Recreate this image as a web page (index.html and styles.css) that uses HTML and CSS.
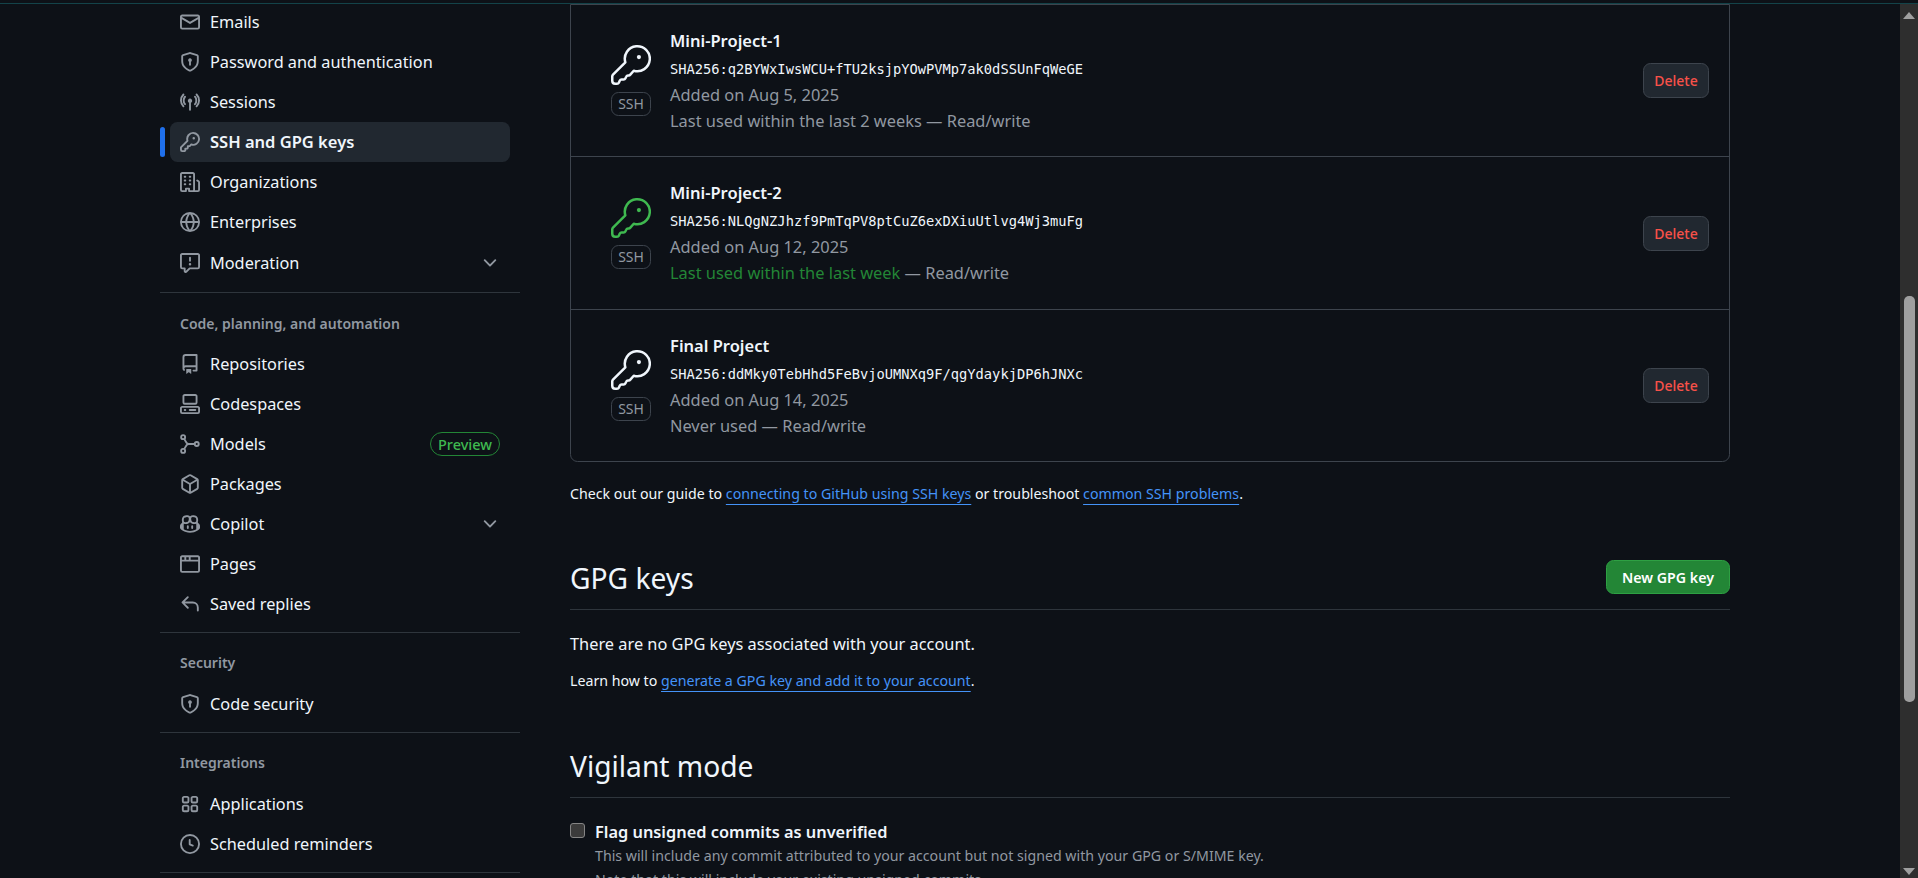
FILE: index.html
```html
<!DOCTYPE html>
<html lang="en">
<head>
    <meta charset="UTF-8">
    <meta name="viewport" content="width=device-width, initial-scale=1.0">
    <title>SSH and GPG keys</title>
    <link rel="stylesheet" href="styles.css">
</head>
<body>
    <svg class="defs" width="0" height="0">
        <symbol id="shield" viewBox="0 0 16 16"><path d="m8.533.133 5.25 1.68A1.75 1.75 0 0 1 15 3.48V7c0 1.566-.32 3.182-1.303 4.682-.983 1.498-2.585 2.813-5.032 3.855a1.697 1.697 0 0 1-1.33 0c-2.447-1.042-4.049-2.357-5.032-3.855C1.32 10.182 1 8.566 1 7V3.48a1.75 1.75 0 0 1 1.217-1.667l5.25-1.68a1.748 1.748 0 0 1 1.066 0Zm-.61 1.429.001.001-5.25 1.68a.251.251 0 0 0-.174.237V7c0 1.36.275 2.666 1.057 3.859.784 1.194 2.121 2.342 4.366 3.298a.196.196 0 0 0 .154 0c2.245-.957 3.582-2.103 4.366-3.297C13.225 9.666 13.5 8.358 13.5 7V3.48a.25.25 0 0 0-.174-.238l-5.25-1.68a.25.25 0 0 0-.153 0ZM9.5 6.5c0 .536-.286 1.032-.75 1.3v2.45a.75.75 0 0 1-1.5 0V7.8A1.5 1.5 0 1 1 9.5 6.5Z"/></symbol>
        <symbol id="chevron" viewBox="0 0 16 16"><path d="M12.78 5.22a.749.749 0 0 1 0 1.06l-4.25 4.25a.749.749 0 0 1-1.06 0L3.22 6.28a.749.749 0 1 1 1.06-1.06L8 8.939l3.72-3.719a.749.749 0 0 1 1.06 0Z"/></symbol>
        <symbol id="big-key" viewBox="0 0 24 24">
            <path fill="none" stroke="currentColor" stroke-width="1.5" stroke-linejoin="round" d="M8.6 10.4 1.2 17.8Q.75 18.25.75 18.9V21.5Q.75 23.25 2.5 23.25H3.6Q4.4 23.25 4.7 22.6L5.3 21.3Q5.6 20.75 6.3 20.75H7.6Q8.3 20.75 8.6 20.1L9.2 18.9Q9.5 18.25 10.2 18.25H10.6Q11.2 18.25 11.6 17.8L13.65 15.45A7.5 7.5 0 1 0 8.6 10.4Z"/>
            <circle cx="16.75" cy="7.25" r="1.25" fill="currentColor"/>
        </symbol>
    </svg>

    <div class="top-strip"></div>

    <div class="page">
        <nav class="sidebar">
            <a class="nav-item"><svg class="icon" viewBox="0 0 16 16"><path d="M1.75 2h12.5c.966 0 1.75.784 1.75 1.75v8.5A1.75 1.75 0 0 1 14.25 14H1.75A1.75 1.75 0 0 1 0 12.25v-8.5C0 2.784.784 2 1.75 2ZM1.5 12.251c0 .138.112.25.25.25h12.5a.25.25 0 0 0 .25-.25V5.809L8.38 9.397a.75.75 0 0 1-.76 0L1.5 5.809v6.442Zm13-8.181v-.32a.25.25 0 0 0-.25-.25H1.75a.25.25 0 0 0-.25.25v.32L8 7.88Z"/></svg>Emails</a>
            <a class="nav-item"><svg class="icon"><use href="#shield"/></svg>Password and authentication</a>
            <a class="nav-item"><svg class="icon" viewBox="0 0 16 16"><path d="M8.75 8.582v5.668a.75.75 0 0 1-1.5 0V8.582a1.75 1.75 0 1 1 1.5 0Zm3.983-7.125a.75.75 0 0 1 1.06.026A7.7 7.7 0 0 1 16 6.75a7.7 7.7 0 0 1-2.207 5.268.75.75 0 1 1-1.086-1.036A6.2 6.2 0 0 0 14.5 6.75a6.2 6.2 0 0 0-1.793-4.232.75.75 0 0 1 .026-1.06Zm-9.466 0a.75.75 0 0 1 .026 1.06A6.2 6.2 0 0 0 1.5 6.75a6.2 6.2 0 0 0 1.793 4.232.75.75 0 1 1-1.086 1.036A7.7 7.7 0 0 1 0 6.75a7.7 7.7 0 0 1 2.207-5.268.75.75 0 0 1 1.06-.025Zm8.2 1.8a.75.75 0 0 1 1.06.03A5 5 0 0 1 13.8 6.75a5 5 0 0 1-1.27 3.51.75.75 0 1 1-1.09-1.03 3.5 3.5 0 0 0 .86-2.48 3.5 3.5 0 0 0-.86-2.48.75.75 0 0 1 .03-1.04Zm-6.93 0a.75.75 0 0 1 .03 1.06 3.5 3.5 0 0 0-.87 2.43c0 .92.3 1.76.87 2.48a.75.75 0 1 1-1.09 1.03A5 5 0 0 1 2.2 6.75c0-1.33.45-2.53 1.27-3.51a.75.75 0 0 1 1.06-.03Z"/></svg>Sessions</a>
            <a class="nav-item active"><svg class="icon" viewBox="0 0 16 16"><path d="M10.5 0a5.499 5.499 0 1 1-1.288 10.848l-.932.932a.749.749 0 0 1-.53.22H7v.75a.749.749 0 0 1-.22.53l-.5.5a.749.749 0 0 1-.53.22H5v.75a.749.749 0 0 1-.22.53l-.5.5a.749.749 0 0 1-.53.22h-2A1.75 1.75 0 0 1 0 14.25v-2c0-.199.079-.389.22-.53l4.932-4.932A5.5 5.5 0 0 1 10.5 0Zm-4 5.5c-.001.431.069.86.205 1.269a.75.75 0 0 1-.181.768L1.5 12.56v1.69c0 .138.112.25.25.25h1.69l.06-.06v-1.19a.75.75 0 0 1 .75-.75h1.19l.06-.06v-1.19a.75.75 0 0 1 .75-.75h1.19l1.023-1.025a.75.75 0 0 1 .768-.18A4 4 0 1 0 6.5 5.5ZM11 6a1 1 0 1 1 0-2 1 1 0 0 1 0 2Z"/></svg>SSH and GPG keys</a>
            <a class="nav-item"><svg class="icon" viewBox="0 0 16 16"><path d="M1.75 16A1.75 1.75 0 0 1 0 14.25V1.75C0 .784.784 0 1.75 0h8.5C11.216 0 12 .784 12 1.75v12.5c0 .085-.006.168-.018.25h2.268a.25.25 0 0 0 .25-.25V8.285a.25.25 0 0 0-.111-.208l-1.055-.703a.749.749 0 1 1 .832-1.248l1.055.703c.487.325.779.871.779 1.456v5.965A1.75 1.75 0 0 1 14.25 16h-3.5a.766.766 0 0 1-.197-.026c-.099.017-.2.026-.303.026h-3a.75.75 0 0 1-.75-.75V14h-1v1.25a.75.75 0 0 1-.75.75Zm-.25-1.75c0 .138.112.25.25.25H4v-1.25a.75.75 0 0 1 .75-.75h2.5a.75.75 0 0 1 .75.75v1.25h2.25a.25.25 0 0 0 .25-.25V1.75a.25.25 0 0 0-.25-.25h-8.5a.25.25 0 0 0-.25.25ZM3.75 6h.5a.75.75 0 0 1 0 1.5h-.5a.75.75 0 0 1 0-1.5ZM3 3.75A.75.75 0 0 1 3.75 3h.5a.75.75 0 0 1 0 1.5h-.5A.75.75 0 0 1 3 3.75Zm4 3A.75.75 0 0 1 7.75 6h.5a.75.75 0 0 1 0 1.5h-.5A.75.75 0 0 1 7 6.75ZM7.75 3h.5a.75.75 0 0 1 0 1.5h-.5a.75.75 0 0 1 0-1.5ZM3 9.75A.75.75 0 0 1 3.75 9h.5a.75.75 0 0 1 0 1.5h-.5A.75.75 0 0 1 3 9.75ZM7.75 9h.5a.75.75 0 0 1 0 1.5h-.5a.75.75 0 0 1 0-1.5Z"/></svg>Organizations</a>
            <a class="nav-item"><svg class="icon" viewBox="0 0 16 16"><path d="M8 0a8 8 0 1 1 0 16A8 8 0 0 1 8 0ZM5.78 8.75a9.64 9.64 0 0 0 1.363 4.177c.255.426.542.832.857 1.215.245-.296.551-.705.857-1.215A9.64 9.64 0 0 0 10.22 8.75Zm4.44-1.5a9.64 9.64 0 0 0-1.363-4.177c-.307-.51-.612-.919-.857-1.215a9.927 9.927 0 0 0-.857 1.215A9.64 9.64 0 0 0 5.78 7.25Zm-5.944 1.5H1.543a6.507 6.507 0 0 0 4.666 5.5c-.123-.181-.24-.365-.352-.552-.715-1.192-1.437-2.874-1.581-4.948Zm-2.733-1.5h2.733c.144-2.074.866-3.756 1.58-4.948.12-.197.237-.381.353-.552a6.507 6.507 0 0 0-4.666 5.5Zm10.181 1.5c-.144 2.074-.866 3.756-1.58 4.948-.12.197-.237.381-.353.552a6.507 6.507 0 0 0 4.666-5.5Zm2.733-1.5a6.507 6.507 0 0 0-4.666-5.5c.123.181.24.365.353.552.714 1.192 1.436 2.874 1.58 4.948Z"/></svg>Enterprises</a>
            <a class="nav-item tall"><svg class="icon" viewBox="0 0 16 16"><path d="M0 1.75C0 .784.784 0 1.75 0h12.5C15.216 0 16 .784 16 1.75v9.5A1.75 1.75 0 0 1 14.25 13H8.06l-2.573 2.573A1.458 1.458 0 0 1 3 14.543V13H1.75A1.75 1.75 0 0 1 0 11.25Zm1.75-.25a.25.25 0 0 0-.25.25v9.5c0 .138.112.25.25.25h2a.75.75 0 0 1 .75.75v2.19l2.72-2.72a.749.749 0 0 1 .53-.22h6.5a.25.25 0 0 0 .25-.25v-9.5a.25.25 0 0 0-.25-.25Zm7 2.25v2.5a.75.75 0 0 1-1.5 0v-2.5a.75.75 0 0 1 1.5 0ZM9 9a1 1 0 1 1-2 0 1 1 0 0 1 2 0Z"/></svg>Moderation<svg class="chevron"><use href="#chevron"/></svg></a>

            <div class="nav-divider"></div>
            <div class="nav-heading code-heading">Code, planning, and automation</div>
            <a class="nav-item"><svg class="icon" viewBox="0 0 16 16"><path d="M2 2.5A2.5 2.5 0 0 1 4.5 0h8.75a.75.75 0 0 1 .75.75v12.5a.75.75 0 0 1-.75.75h-2.5a.75.75 0 0 1 0-1.5h1.75v-2h-8a1 1 0 0 0-.714 1.7.75.75 0 1 1-1.072 1.05A2.495 2.495 0 0 1 2 11.5Zm10.5-1h-8a1 1 0 0 0-1 1v6.708A2.486 2.486 0 0 1 4.5 9h8ZM5 12.25a.25.25 0 0 1 .25-.25h3.5a.25.25 0 0 1 .25.25v3.25a.25.25 0 0 1-.4.2l-1.45-1.087a.249.249 0 0 0-.3 0L5.4 15.7a.25.25 0 0 1-.4-.2Z"/></svg>Repositories</a>
            <a class="nav-item"><svg class="icon" viewBox="0 0 16 16"><path d="M0 11.25c0-.966.784-1.75 1.75-1.75h12.5c.966 0 1.75.784 1.75 1.75v3A1.75 1.75 0 0 1 14.25 16H1.75A1.75 1.75 0 0 1 0 14.25Zm2-9.5C2 .784 2.784 0 3.75 0h8.5C13.216 0 14 .784 14 1.75v5a1.75 1.75 0 0 1-1.75 1.75h-8.5A1.75 1.75 0 0 1 2 6.75Zm1.75-.25a.25.25 0 0 0-.25.25v5c0 .138.112.25.25.25h8.5a.25.25 0 0 0 .25-.25v-5a.25.25 0 0 0-.25-.25Zm-2 9.5a.25.25 0 0 0-.25.25v3c0 .138.112.25.25.25h12.5a.25.25 0 0 0 .25-.25v-3a.25.25 0 0 0-.25-.25Z"/><path d="M7 12.75a.75.75 0 0 1 .75-.75h4.5a.75.75 0 0 1 0 1.5h-4.5a.75.75 0 0 1-.75-.75Zm-4 0a.75.75 0 0 1 .75-.75h.5a.75.75 0 0 1 0 1.5h-.5a.75.75 0 0 1-.75-.75Z"/></svg>Codespaces</a>
            <a class="nav-item"><svg class="icon" viewBox="0 0 16 16"><g fill="none" stroke="currentColor" stroke-width="1.5"><circle cx="2.5" cy="2.5" r="1.6"/><circle cx="2.5" cy="13.5" r="1.6"/><circle cx="13.4" cy="8" r="1.6"/><path d="M3.3 3.9 5.2 7Q5.8 8 7 8H11.8M3.3 12.1 5.2 9Q5.8 8 7 8"/></g></svg>Models<span class="preview">Preview</span></a>
            <a class="nav-item"><svg class="icon" viewBox="0 0 16 16"><path d="m8.878.392 5.25 3.045c.54.314.872.89.872 1.514v6.098a1.75 1.75 0 0 1-.872 1.514l-5.25 3.045a1.75 1.75 0 0 1-1.756 0l-5.25-3.045A1.75 1.75 0 0 1 1 11.049V4.951c0-.624.332-1.201.872-1.514L7.122.392a1.75 1.75 0 0 1 1.756 0ZM7.875 1.69l-4.63 2.685L8 7.133l4.755-2.758-4.63-2.685a.248.248 0 0 0-.25 0ZM2.5 5.677v5.372c0 .09.047.171.125.216l4.625 2.683V8.432Zm6.25 8.271 4.625-2.683a.25.25 0 0 0 .125-.216V5.677L8.75 8.432Z"/></svg>Packages</a>
            <a class="nav-item"><svg class="icon" viewBox="0 0 16 16"><path d="M7.998 15.035c-4.562 0-7.873-2.914-7.998-3.749V9.338c.085-.628.677-1.686 1.588-2.065.013-.07.024-.143.036-.218.029-.183.06-.384.126-.612-.201-.508-.254-1.084-.254-1.656 0-.87.128-1.769.693-2.484.579-.733 1.494-1.124 2.724-1.261 1.206-.134 2.262.034 2.944.765.05.053.096.108.139.165.044-.057.094-.112.143-.165.682-.731 1.738-.899 2.944-.765 1.23.137 2.145.528 2.724 1.261.566.715.693 1.614.693 2.484 0 .572-.053 1.148-.254 1.656.066.228.098.429.126.612.012.076.024.148.037.218.924.385 1.522 1.471 1.591 2.095v1.872c0 .766-3.351 3.795-8.002 3.795Zm0-1.485c2.28 0 4.584-1.11 5.002-1.433V7.862l-.023-.116c-.49.21-1.075.291-1.727.291-1.146 0-2.059-.327-2.71-.991A3.222 3.222 0 0 1 8 6.303a3.24 3.24 0 0 1-.544.743c-.65.664-1.563.991-2.71.991-.652 0-1.236-.081-1.727-.291l-.023.116v4.255c.419.323 2.722 1.433 5.002 1.433ZM6.762 2.83c-.193-.206-.637-.413-1.682-.297-1.019.113-1.479.404-1.713.7-.247.312-.369.789-.369 1.554 0 .793.129 1.171.308 1.371.162.181.519.379 1.442.379.853 0 1.339-.235 1.638-.54.315-.322.527-.827.617-1.553.117-.935-.037-1.395-.241-1.614Zm4.155-.297c-1.044-.116-1.488.091-1.681.297-.204.219-.359.679-.242 1.614.091.726.303 1.231.618 1.553.299.305.784.54 1.638.54.922 0 1.28-.198 1.442-.379.179-.2.308-.578.308-1.371 0-.765-.123-1.242-.37-1.554-.233-.296-.693-.587-1.713-.7Z"/><path d="M6.25 9.037a.75.75 0 0 1 .75.75v1.501a.75.75 0 0 1-1.5 0V9.787a.75.75 0 0 1 .75-.75Zm4.25.75v1.501a.75.75 0 0 1-1.5 0V9.787a.75.75 0 0 1 1.5 0Z"/></svg>Copilot<svg class="chevron"><use href="#chevron"/></svg></a>
            <a class="nav-item"><svg class="icon" viewBox="0 0 16 16"><path d="M0 2.75C0 1.784.784 1 1.75 1h12.5c.966 0 1.75.784 1.75 1.75v10.5A1.75 1.75 0 0 1 14.25 15H1.75A1.75 1.75 0 0 1 0 13.25ZM14.5 6h-13v7.25c0 .138.112.25.25.25h12.5a.25.25 0 0 0 .25-.25Zm-6-3.5v2h6V2.75a.25.25 0 0 0-.25-.25ZM5 2.5v2h2v-2Zm-3.25 0a.25.25 0 0 0-.25.25V4.5h2v-2Z"/></svg>Pages</a>
            <a class="nav-item"><svg class="icon" viewBox="0 0 16 16"><path d="M6.78 1.97a.75.75 0 0 1 0 1.06L3.81 6h6.44A4.75 4.75 0 0 1 15 10.75v2.5a.75.75 0 0 1-1.5 0v-2.5a3.25 3.25 0 0 0-3.25-3.25H3.81l2.97 2.97a.749.749 0 0 1-.326 1.275.749.749 0 0 1-.734-.215L1.47 7.28a.75.75 0 0 1 0-1.06l4.25-4.25a.75.75 0 0 1 1.06 0Z"/></svg>Saved replies</a>

            <div class="nav-divider"></div>
            <div class="nav-heading">Security</div>
            <a class="nav-item"><svg class="icon"><use href="#shield"/></svg>Code security</a>

            <div class="nav-divider"></div>
            <div class="nav-heading">Integrations</div>
            <a class="nav-item"><svg class="icon" viewBox="0 0 16 16"><path d="M1.5 3.25c0-.966.784-1.75 1.75-1.75h2.5c.966 0 1.75.784 1.75 1.75v2.5A1.75 1.75 0 0 1 5.75 7.5h-2.5A1.75 1.75 0 0 1 1.5 5.75Zm7 0c0-.966.784-1.75 1.75-1.75h2.5c.966 0 1.75.784 1.75 1.75v2.5a1.75 1.75 0 0 1-1.75 1.75h-2.5A1.75 1.75 0 0 1 8.5 5.75Zm-7 7c0-.966.784-1.75 1.75-1.75h2.5c.966 0 1.75.784 1.75 1.75v2.5a1.75 1.75 0 0 1-1.75 1.75h-2.5a1.75 1.75 0 0 1-1.75-1.75Zm7 0c0-.966.784-1.75 1.75-1.75h2.5c.966 0 1.75.784 1.75 1.75v2.5a1.75 1.75 0 0 1-1.75 1.75h-2.5a1.75 1.75 0 0 1-1.75-1.75ZM3.25 3a.25.25 0 0 0-.25.25v2.5c0 .138.112.25.25.25h2.5A.25.25 0 0 0 6 5.75v-2.5A.25.25 0 0 0 5.75 3Zm7 0a.25.25 0 0 0-.25.25v2.5c0 .138.112.25.25.25h2.5a.25.25 0 0 0 .25-.25v-2.5a.25.25 0 0 0-.25-.25ZM3 10.25v2.5c0 .138.112.25.25.25h2.5a.25.25 0 0 0 .25-.25v-2.5a.25.25 0 0 0-.25-.25h-2.5a.25.25 0 0 0-.25.25Zm7.25-.25a.25.25 0 0 0-.25.25v2.5c0 .138.112.25.25.25h2.5a.25.25 0 0 0 .25-.25v-2.5a.25.25 0 0 0-.25-.25Z"/></svg>Applications</a>
            <a class="nav-item"><svg class="icon" viewBox="0 0 16 16"><path d="M8 0a8 8 0 1 1 0 16A8 8 0 0 1 8 0ZM1.5 8a6.5 6.5 0 1 0 13 0 6.5 6.5 0 0 0-13 0Zm7-3.25v2.992l2.028.812a.75.75 0 0 1-.557 1.392l-2.5-1A.751.751 0 0 1 7 8.25v-3.5a.75.75 0 0 1 1.5 0Z"/></svg>Scheduled reminders</a>
            <div class="nav-divider"></div>
        </nav>

        <main class="content">
            <div class="key-box">
                <div class="key-row">
                    <div class="key-type">
                        <svg class="key-icon"><use href="#big-key"/></svg>
                        <span class="badge">SSH</span>
                    </div>
                    <div class="key-info">
                        <div class="key-name">Mini-Project-1</div>
                        <div class="key-hash">SHA256:q2BYWxIwsWCU+fTU2ksjpYOwPVMp7ak0dSSUnFqWeGE</div>
                        <div class="key-meta">Added on Aug 5, 2025</div>
                        <div class="key-meta">Last used within the last 2 weeks — Read/write</div>
                    </div>
                    <button class="btn-delete">Delete</button>
                </div>
                <div class="key-row">
                    <div class="key-type">
                        <svg class="key-icon recent"><use href="#big-key"/></svg>
                        <span class="badge">SSH</span>
                    </div>
                    <div class="key-info">
                        <div class="key-name">Mini-Project-2</div>
                        <div class="key-hash">SHA256:NLQgNZJhzf9PmTqPV8ptCuZ6exDXiuUtlvg4Wj3muFg</div>
                        <div class="key-meta">Added on Aug 12, 2025</div>
                        <div class="key-meta"><span class="recent-text">Last used within the last week</span> — Read/write</div>
                    </div>
                    <button class="btn-delete">Delete</button>
                </div>
                <div class="key-row">
                    <div class="key-type">
                        <svg class="key-icon"><use href="#big-key"/></svg>
                        <span class="badge">SSH</span>
                    </div>
                    <div class="key-info">
                        <div class="key-name">Final Project</div>
                        <div class="key-hash">SHA256:ddMky0TebHhd5FeBvjoUMNXq9F/qgYdaykjDP6hJNXc</div>
                        <div class="key-meta">Added on Aug 14, 2025</div>
                        <div class="key-meta">Never used — Read/write</div>
                    </div>
                    <button class="btn-delete">Delete</button>
                </div>
            </div>

            <p class="small-note guide">Check out our guide to <a href="#">connecting to GitHub using SSH keys</a> or troubleshoot <a href="#">common SSH problems</a>.</p>

            <div class="section-head gpg-head">
                <h2>GPG keys</h2>
                <button class="btn-new">New GPG key</button>
            </div>
            <p class="no-keys">There are no GPG keys associated with your account.</p>
            <p class="small-note learn">Learn how to <a href="#">generate a GPG key and add it to your account</a>.</p>

            <div class="section-head vigilant-head">
                <h2>Vigilant mode</h2>
            </div>
            <div class="check-row">
                <span class="check-box"></span>
                <div>
                    <div class="check-label">Flag unsigned commits as unverified</div>
                    <div class="check-note">This will include any commit attributed to your account but not signed with your GPG or S/MIME key.</div>
                    <div class="check-note">Note that this will include your existing unsigned commits.</div>
                </div>
            </div>
        </main>

        <div class="scrollbar">
            <span class="arrow-up"></span>
            <span class="thumb"></span>
            <span class="arrow-down"></span>
        </div>
    </div>
</body>
</html>
```

FILE: styles.css
```css
* {
    box-sizing: border-box;
}
html, body {
    height: 100%;
}
body {
    margin: 0;
    overflow: hidden;
    background-color: #0d1117;
    color: #f0f6fc;
    font-family: "Noto Sans", sans-serif;
    font-size: 16.35px;
    line-height: 24px;
}
.defs {
    display: block;
    height: 0;
}
.top-strip {
    height: 4px;
    border-bottom: 1px solid #134349;
}
.page {
    display: flex;
    height: 874px;
    overflow: hidden;
}

/* sidebar */
.sidebar {
    flex: none;
    width: 360px;
    margin-left: 160px;
    margin-top: -2px;
}
.nav-item {
    position: relative;
    display: flex;
    align-items: center;
    width: 340px;
    height: 40px;
    margin-left: 10px;
    padding-left: 10px;
    border-radius: 7.5px;
    font-size: 16.3px;
}
.nav-item.tall {
    height: 42px;
}
.nav-item.active {
    background-color: #212830;
    font-size: 16.5px;
    font-weight: 600;
}
.nav-item.active::before {
    content: "";
    position: absolute;
    left: -10px;
    top: 5px;
    width: 5px;
    height: 30px;
    border-radius: 3px;
    background-color: #1f6feb;
}
.icon {
    flex: none;
    width: 20px;
    height: 20px;
    margin-right: 10px;
    fill: #9198a1;
    color: #9198a1;
}
.chevron {
    width: 20px;
    height: 20px;
    margin-left: auto;
    margin-right: 10px;
    fill: #9198a1;
}
.preview {
    margin-left: auto;
    margin-right: 10px;
    margin-bottom: 1px;
    height: 24px;
    padding: 0 7px;
    border: 1px solid #238636;
    border-radius: 12px;
    color: #3fb950;
    font-size: 14.5px;
    font-weight: 500;
    line-height: 22px;
}
.nav-divider {
    height: 1px;
    margin-top: 8px;
    background-color: #3d444db3;
}
.nav-heading {
    height: 51px;
    padding: 18px 0 0 20px;
    color: #9198a1;
    font-size: 14px;
    font-weight: 600;
}
.code-heading {
    padding-top: 19px;
}

/* main column */
.content {
    flex: none;
    width: 1160px;
    margin-left: 50px;
}
.key-box {
    border: 1px solid #3d444d;
    border-radius: 0 0 7.5px 7.5px;
}
.key-row {
    display: flex;
    align-items: center;
    height: 152px;
    padding: 0 20px 0 40px;
    border-bottom: 1px solid #3d444d;
}
.key-row:nth-child(2) {
    height: 153px;
}
.key-row:last-child {
    height: 151px;
    border-bottom: none;
}
.key-type {
    display: flex;
    flex-direction: column;
    align-items: center;
    width: 40px;
    margin-right: 19px;
}
.key-icon {
    width: 40px;
    height: 40px;
    margin-bottom: 7px;
    color: #f0f6fc;
}
.key-icon.recent {
    color: #3fb950;
}
.badge {
    width: 40px;
    height: 24px;
    border: 1px solid #3d444d;
    border-radius: 7.5px;
    color: #9198a1;
    font-size: 14px;
    line-height: 22px;
    text-align: center;
}
.key-info {
    flex: 1;
    line-height: 26px;
}
.key-name {
    font-size: 16.5px;
    font-weight: 600;
}
.key-hash {
    margin-top: 2px;
    font-family: "DejaVu Sans Mono", monospace;
    font-size: 13.72px;
}
.key-meta {
    color: #9198a1;
    font-size: 16.4px;
}
.recent-text {
    color: #238636;
}
.btn-delete {
    width: 66px;
    height: 35px;
    padding: 0;
    border: 1px solid #3d444d;
    border-radius: 7.5px;
    background-color: #212830;
    color: #f85149;
    font-family: inherit;
    font-size: 14px;
    font-weight: 500;
}
.small-note {
    margin: 0;
    font-size: 14.2px;
}
.small-note a {
    color: #4493f8;
    text-decoration: underline;
    text-underline-offset: 5px;
}
.guide {
    margin-top: 20px;
}
.section-head {
    display: flex;
    align-items: center;
    justify-content: space-between;
    height: 53px;
    padding-bottom: 10px;
    border-bottom: 1px solid #3d444db3;
}
.section-head h2 {
    margin: 0;
    font-size: 28.2px;
    font-weight: 400;
    line-height: 42px;
}
.gpg-head {
    margin-top: 51px;
}
.vigilant-head {
    margin-top: 52px;
}
.btn-new {
    width: 124px;
    height: 34px;
    margin-bottom: 2px;
    padding: 0;
    border: 1px solid #2ea043;
    border-radius: 7.5px;
    background-color: #238636;
    color: #ffffff;
    font-family: inherit;
    font-size: 14.2px;
    font-weight: 600;
}
.no-keys {
    margin: 22px 0 0;
}
.learn {
    margin-top: 13px;
}
.check-row {
    display: flex;
    margin-top: 22px;
}
.check-box {
    flex: none;
    width: 15px;
    height: 15px;
    margin: 3px 10px 0 0;
    border: 1px solid #858585;
    border-radius: 3px;
    background-color: #3b3b3b;
}
.check-label {
    font-weight: 600;
}
.check-note {
    color: #9198a1;
    font-size: 14.2px;
}

/* window scrollbar */
.scrollbar {
    position: relative;
    flex: none;
    width: 18px;
    margin-left: auto;
    background-color: #2e2e2e;
}
.arrow-up, .arrow-down {
    position: absolute;
    left: 3px;
    border-left: 6px solid transparent;
    border-right: 6px solid transparent;
}
.arrow-up {
    top: 8px;
    border-bottom: 7px solid #9f9f9f;
}
.arrow-down {
    bottom: 3px;
    border-top: 7px solid #9f9f9f;
}
.thumb {
    position: absolute;
    top: 292px;
    left: 4px;
    width: 11px;
    height: 406px;
    border-radius: 5px;
    background-color: #9f9f9f;
}
```
